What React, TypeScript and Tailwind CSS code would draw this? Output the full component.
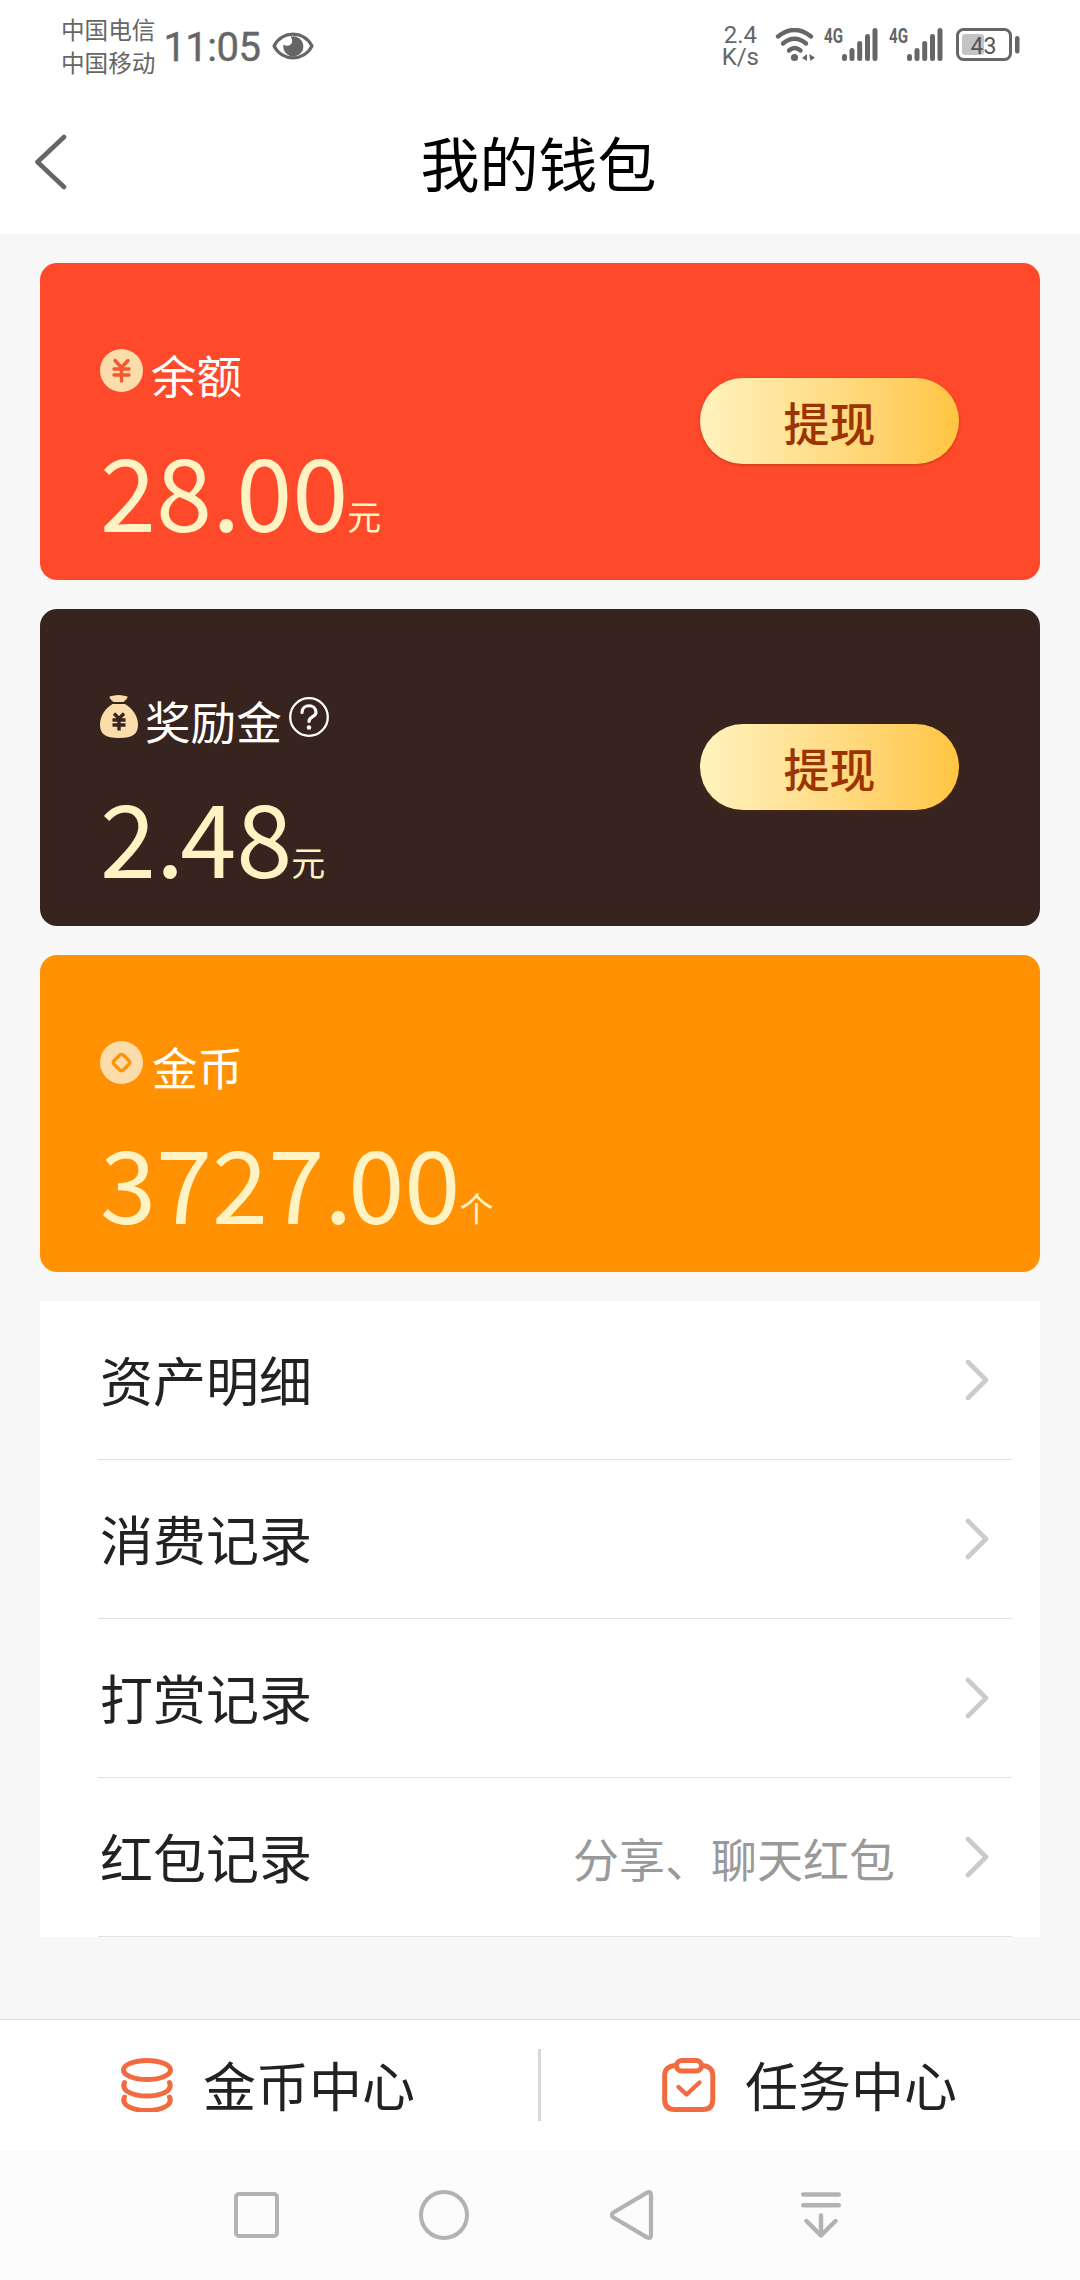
import React from 'react';

interface WalletCardProps {
  icon: React.ReactNode;
  label: string;
  labelClass: string;
  whole: string;
  decimals: string;
  unit: string;
  className: string;
  help?: boolean;
  withdraw?: boolean;
}

interface MenuItem {
  title: string;
  note?: string;
}

const menuItems: MenuItem[] = [
  { title: '资产明细' },
  { title: '消费记录' },
  { title: '打赏记录' },
  { title: '红包记录', note: '分享、聊天红包' },
];

const EyeIcon = () => (
  <svg width="42" height="28" viewBox="0 0 42 28" fill="none">
    <path d="M2 14C10 -1.800 32 -1.800 40 14C32 29.800 10 29.800 2 14Z" stroke="#666" strokeWidth="3.200" strokeLinejoin="round" />
    <path d="M18.500 4.800A10 10 0 1 1 11.500 12.500A5.200 5.200 0 1 0 18.500 4.800Z" fill="#666" />
  </svg>
);

const WifiIcon = () => (
  <svg width="42" height="34" viewBox="0 0 42 34" fill="none">
    <g stroke="#666" strokeWidth="4.400" strokeLinecap="round">
      <path d="M3 8.500Q19.500 -4.500 36 8.500" />
      <path d="M8 15.500Q19.500 6 31 15.500" />
      <path d="M14 22.500Q19.500 17.500 25.500 22.500" />
    </g>
    <circle cx="19.500" cy="29.500" r="3.600" fill="#666" />
    <path d="M32 26V33L27 30ZM34 26L40 29.500L35.500 33Z" fill="#666" />
  </svg>
);

const SignalIcon = () => (
  <div className="flex">
    <svg width="18" height="34" viewBox="0 0 18 34" className="overflow-visible">
      <text
        x="0"
        y="15"
        textLength="19"
        lengthAdjust="spacingAndGlyphs"
        fill="#666"
        className="font-['Roboto',sans-serif] text-[20px] font-bold"
      >
        4G
      </text>
    </svg>
    <svg width="36" height="34" viewBox="0 0 36 34" fill="#666">
      <rect x="0" y="26" width="5" height="7" rx="2.500" />
      <rect x="7.500" y="20" width="5" height="13" rx="2.500" />
      <rect x="15.200" y="13" width="5" height="20" rx="2.500" />
      <rect x="23" y="6" width="5" height="27" rx="2.500" />
      <rect x="30.500" y="0" width="5" height="33" rx="2.500" />
    </svg>
  </div>
);

const BatteryIcon = () => (
  <svg width="64" height="34" viewBox="0 0 64 34" fill="none">
    <rect x="1.500" y="1.500" width="53" height="30" rx="6" stroke="#666" strokeWidth="3" />
    <rect x="6" y="6" width="22" height="21" rx="3" fill="#c4c4c4" />
    <rect x="59" y="8" width="4.500" height="17.500" rx="2.200" fill="#666" />
    <text x="14.500" y="25.500" fill="#555" className="font-['Roboto',sans-serif] text-[23px]">
      43
    </text>
  </svg>
);

const YuanIcon = () => (
  <svg width="43" height="43" viewBox="0 0 43 43" fill="none">
    <circle cx="21.500" cy="21.500" r="21.500" fill="#fbdcab" />
    <path
      d="M15 11.500L21.500 18.500L28 11.500M14 20H29M14 26H29M21.500 19V32"
      stroke="#f2582f"
      strokeWidth="3.400"
      strokeLinecap="round"
      strokeLinejoin="round"
    />
  </svg>
);

const MoneyBagIcon = () => (
  <svg width="38" height="43" viewBox="0 0 38 43" fill="none">
    <path d="M9.500 1.500Q14 0 18.500 0Q23 0 27.500 1.500Q28 3 23.500 7H13.500Q9 3 9.500 1.500Z" fill="#fbdcab" />
    <path d="M12.500 9H25C32 13 38 21 38 29.500C38 39 33 43 19 43C5 43 0 39 0 29.500C0 21 5.500 13 12.500 9Z" fill="#fbdcab" />
    <path d="M14 18.500L19 23.500L24 18.500M12.500 25H25.500M12.500 30H25.500M19 24V35.500" stroke="#38241f" strokeWidth="3.400" />
  </svg>
);

const CoinIcon = () => (
  <svg width="43" height="43" viewBox="0 0 43 43" fill="none">
    <circle cx="21.500" cy="21.500" r="21.500" fill="#fbdcab" />
    <rect x="15" y="15" width="13" height="13" rx="2.500" transform="rotate(45 21.500 21.500)" stroke="#fb9414" strokeWidth="3.400" />
  </svg>
);

const HelpIcon = () => (
  <svg width="40" height="40" viewBox="0 0 40 40" fill="none" className="ml-[7px] mt-[2px]">
    <circle cx="20" cy="20" r="18.800" stroke="#fff" strokeWidth="2.300" />
    <path d="M13 15.500C13 6.500 27 6.500 27 15.500C27 20 20 19.500 20 24.500" stroke="#fff" strokeWidth="3.200" strokeLinecap="round" />
    <circle cx="20" cy="30.500" r="2.300" fill="#fff" />
  </svg>
);

const ChevronRight = () => (
  <svg width="24" height="42" viewBox="0 0 24 42" fill="none">
    <path d="M3 3L21 21L3 39" stroke="#cbcbc8" strokeWidth="4.600" strokeLinecap="round" strokeLinejoin="round" />
  </svg>
);

const CoinsIcon = () => (
  <svg width="52" height="54" viewBox="0 0 52 54" fill="none" stroke="#f26b40" strokeWidth="5" strokeLinecap="round">
    <ellipse cx="26" cy="12" rx="23.500" ry="9.500" />
    <path d="M3.500 24.500C-4 42.500 56 42.500 48.500 24.500" />
    <path d="M3.500 39C-4 57 56 57 48.500 39" />
  </svg>
);

const TaskIcon = () => (
  <svg width="54" height="54" viewBox="0 0 54 54" fill="none" stroke="#f26b40" strokeWidth="5" strokeLinecap="round" strokeLinejoin="round">
    <path d="M14 7.500H13C6.500 8 2.700 11.500 2.700 17V41.500C2.700 48 6 51.500 12.500 51.500H41C47.500 51.500 50.800 48 50.800 41.500V17C50.800 11.500 47 8 40.500 7.500H39.500" />
    <rect x="14.500" y="2.500" width="25" height="10.500" rx="5.200" />
    <path d="M16.500 29L24.500 36.500L37.500 24.500" strokeWidth="4.400" />
  </svg>
);

const WalletCard: React.FC<WalletCardProps> = ({
  icon,
  label,
  labelClass,
  whole,
  decimals,
  unit,
  className,
  help,
  withdraw,
}) => (
  <section className={`flex h-[317px] items-center justify-between rounded-[17px] pl-[60px] pr-[81px] ${className}`}>
    <div className="flex h-full flex-col pt-[86px]">
      <div className="flex h-[52px] items-start">
        {icon}
        <span className={`text-[45.6px] leading-[50px] text-white ${labelClass}`}>{label}</span>
        {help && <HelpIcon />}
      </div>
      <div className="mt-[27px] flex items-baseline leading-[120px] text-[#fff3c3]">
        <span className="text-[101px]">
          {whole}
          <span className="tracking-[-4px]">.</span>
          {decimals}
        </span>
        <span className="pb-[2px] text-[34px] leading-none [transform:translate(-1px,-2px)]">{unit}</span>
      </div>
    </div>
    {withdraw && (
      <button className="mb-[2px] h-[86px] w-[259px] rounded-full bg-linear-to-r from-[#fff3bd] to-[#ffc53f] text-[46px] font-medium leading-none text-[#9c3400] shadow-[0_1px_3px_rgba(120,40,0,0.45)]">
        提现
      </button>
    )}
  </section>
);

const StatusBar = () => (
  <div className="flex h-[94px] items-start justify-between pl-[61px] pr-[60px] text-[#666]">
    <div className="flex">
      <div className="pt-[13px] text-[23.6px] leading-[33px]">
        <p>中国电信</p>
        <p>中国移动</p>
      </div>
      <span className="ml-[8px] mt-[23px] font-['Roboto',sans-serif] text-[40px] leading-[50px] tracking-[-0.5px] [-webkit-text-stroke:0.4px_#666]">
        11:05
      </span>
      <div className="ml-[12px] mt-[32px]">
        <EyeIcon />
      </div>
    </div>
    <div className="flex">
      <div className="mr-[16px] pt-[24px] text-center font-['Roboto',sans-serif] text-[24px] leading-[22px]">
        <p>2.4</p>
        <p>K/s</p>
      </div>
      <div className="mt-[28px] flex">
        <WifiIcon />
        <div className="ml-[7px]">
          <SignalIcon />
        </div>
        <div className="ml-[11px]">
          <SignalIcon />
        </div>
        <div className="ml-[13px]">
          <BatteryIcon />
        </div>
      </div>
    </div>
  </div>
);

const SystemNav = () => (
  <nav className="flex h-[130px] items-center bg-[#fcfcfc] px-[162px]">
    <div className="flex w-[188px] justify-center">
      <div className="h-[46px] w-[45px] rounded-[5px] border-4 border-[#b2b2b2]" />
    </div>
    <div className="flex w-[188px] justify-center">
      <div className="h-[50px] w-[50px] rounded-full border-4 border-[#b2b2b2]" />
    </div>
    <div className="flex w-[188px] justify-center">
      <svg width="44" height="50" viewBox="0 0 44 50" fill="none">
        <path d="M3 22.800L37 2.600Q41 1 41 5V45Q41 49 37 47.400L3 27.200Q1 25 3 22.800Z" stroke="#b2b2b2" strokeWidth="4.200" strokeLinejoin="round" />
      </svg>
    </div>
    <div className="flex w-[190px] justify-center">
      <svg width="40" height="46" viewBox="0 0 40 46" fill="none" stroke="#b2b2b2" strokeWidth="4.400" strokeLinecap="round" strokeLinejoin="round">
        <path d="M2.200 2.500H37.800M2.200 13.200H37.800M20 23.500V43.500M5.500 29L20 43.500L34.500 29" />
      </svg>
    </div>
  </nav>
);

const App: React.FC = () => {
  return (
    <div className="flex h-[2280px] w-[1080px] flex-col bg-[#f7f7f7] font-['Noto_Sans_CJK_SC',sans-serif]">
      <header className="h-[234px] bg-white">
        <StatusBar />
        <div className="grid h-[140px] grid-cols-[80px_1fr_83px] items-start">
          <svg width="34" height="56" viewBox="0 0 34 56" fill="none" className="ml-[34px] mt-10">
            <path d="M30 3L3.500 28L30 53" stroke="#666" strokeWidth="4.600" strokeLinecap="round" strokeLinejoin="round" />
          </svg>
          <h1 className="mt-[24px] text-center text-[59px] leading-[88px] text-black">我的钱包</h1>
        </div>
      </header>

      <main className="flex-1 px-10 pt-[29px]">
        <div className="flex flex-col gap-[29px]">
          <WalletCard
            icon={<YuanIcon />}
            label="余额"
            labelClass="ml-2"
            whole="28"
            decimals="00"
            unit="元"
            className="bg-[#ff492b]"
            withdraw
          />
          <WalletCard
            icon={<MoneyBagIcon />}
            label="奖励金"
            labelClass="ml-[7px]"
            whole="2"
            decimals="48"
            unit="元"
            className="bg-[#38241f]"
            help
            withdraw
          />
          <WalletCard
            icon={<CoinIcon />}
            label="金币"
            labelClass="ml-[9px]"
            whole="3727"
            decimals="00"
            unit="个"
            className="bg-[#ff9102]"
          />
        </div>

        <ul className="mt-[29px] bg-white pl-[58px] pr-[28px]">
          {menuItems.map((item) => (
            <li key={item.title} className="flex h-[159px] items-center border-b border-[#e2e2e2] pl-[2px] pr-[23px]">
              <span className="flex-1 pb-px text-[53px] leading-none text-[#222]">{item.title}</span>
              {item.note && <span className="mr-[70px] text-[46px] leading-none text-[#999]">{item.note}</span>}
              <ChevronRight />
            </li>
          ))}
        </ul>
      </main>

      <footer>
        <div className="flex h-[131px] items-center border-t border-[#dcdcdc] bg-white text-[53px] leading-none text-[#222]">
          <div className="flex w-[538px] items-center pl-[121px]">
            <CoinsIcon />
            <span className="ml-[30px] pb-[2px]">金币中心</span>
          </div>
          <div className="h-[72px] w-[3px] bg-[#d8d8d8]" />
          <div className="flex flex-1 items-center pl-[121px]">
            <TaskIcon />
            <span className="ml-[29px] pb-[2px]">任务中心</span>
          </div>
        </div>
        <SystemNav />
      </footer>
    </div>
  );
};

export default App;
